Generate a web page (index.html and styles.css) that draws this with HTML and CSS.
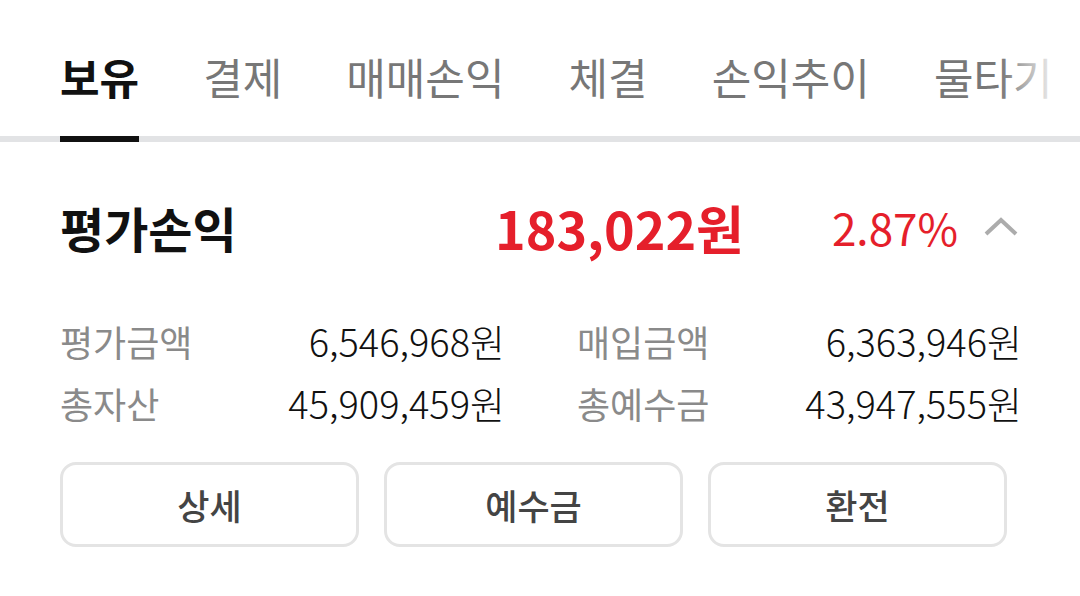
FILE: index.html
```html
<!DOCTYPE html>
<html lang="ko">
<head>
	<meta charset="UTF-8">
	<title>보유</title>
	<link rel="stylesheet" href="styles.css">
</head>
<body>
	<section class="warp">
		<div class="tab-bar">
			<ul class="tab">
				<li class="active">보유</li>
				<li>결제</li>
				<li>매매손익</li>
				<li>체결</li>
				<li>손익추이</li>
				<li>물타기</li>
			</ul>
			<div class="tab-fade"></div>
		</div>

		<div class="summary">
			<div class="summary-title">평가손익</div>
			<div class="summary-amount">183,022원</div>
			<div class="summary-rate">2.87%</div>
			<svg class="summary-toggle" width="34" height="20" viewBox="0 0 34 20">
				<path d="M2 17 L17 3 L32 17" fill="none" stroke="#acacac" stroke-width="4"/>
			</svg>
		</div>

		<div class="detail">
			<div class="detail-row">
				<span class="detail-label">평가금액</span>
				<span class="detail-value">6,546,968원</span>
			</div>
			<div class="detail-row">
				<span class="detail-label">매입금액</span>
				<span class="detail-value">6,363,946원</span>
			</div>
			<div class="detail-row">
				<span class="detail-label">총자산</span>
				<span class="detail-value">45,909,459원</span>
			</div>
			<div class="detail-row">
				<span class="detail-label">총예수금</span>
				<span class="detail-value">43,947,555원</span>
			</div>
		</div>

		<div class="btn-group">
			<button class="btn">상세</button>
			<button class="btn">예수금</button>
			<button class="btn">환전</button>
		</div>
	</section>
</body>
</html>
```

FILE: styles.css
```css
body{
	margin:0;
	background:#fff;
	font-family:"Noto Sans CJK KR","Noto Sans",sans-serif;
}
ul,li{
	margin:0;
	padding:0;
	list-style:none;
}
.warp{
	width:1080px;
	height:596px;
	overflow:hidden;
}
.tab-bar{
	position:relative;
	overflow:hidden;
}
.tab{
	display:flex;
	gap:64px;
	padding:0 60px;
	border-bottom:6px solid #e2e3e5;
	white-space:nowrap;
}
.tab>li{
	flex:none;
	padding:48px 0 32px;
	margin-bottom:-6px;
	font-size:43px;
	line-height:56px;
	color:#777;
	border-bottom:6px solid transparent;
}
.tab>li.active{
	color:#111;
	font-weight:700;
	border-bottom-color:#111;
}
.tab-fade{
	position:absolute;
	top:0;
	right:0;
	width:80px;
	height:130px;
	background:linear-gradient(to right,rgba(255,255,255,0),#fff 75%);
}
.summary{
	display:flex;
	align-items:center;
	margin-top:55px;
	padding:0 62px 0 60px;
	height:60px;
}
.summary-title{
	flex:1;
	font-size:48px;
	font-weight:700;
	color:#111;
}
.summary-amount{
	font-size:52px;
	font-weight:700;
	color:#e51f2b;
}
.summary-rate{
	margin-left:88px;
	font-size:44px;
	color:#e51f2b;
}
.summary-toggle{
	margin-left:26px;
}
.detail{
	display:grid;
	grid-template-columns:1fr 1fr;
	column-gap:72px;
	margin-top:53px;
	padding:0 58px 0 60px;
}
.detail-row{
	display:flex;
	justify-content:space-between;
	line-height:62px;
}
.detail-label{
	font-size:36px;
	color:#8a8a8a;
}
.detail-value{
	font-size:38px;
	color:#111;
	font-weight:300;
}
.btn-group{
	display:grid;
	grid-template-columns:repeat(3,299px);
	gap:25px;
	margin-top:28px;
	padding:0 60px;
}
.btn{
	height:85px;
	background:#fff;
	border:3px solid #e4e4e4;
	border-radius:16px;
	font-family:inherit;
	font-size:35px;
	font-weight:500;
	color:#444;
}
```
